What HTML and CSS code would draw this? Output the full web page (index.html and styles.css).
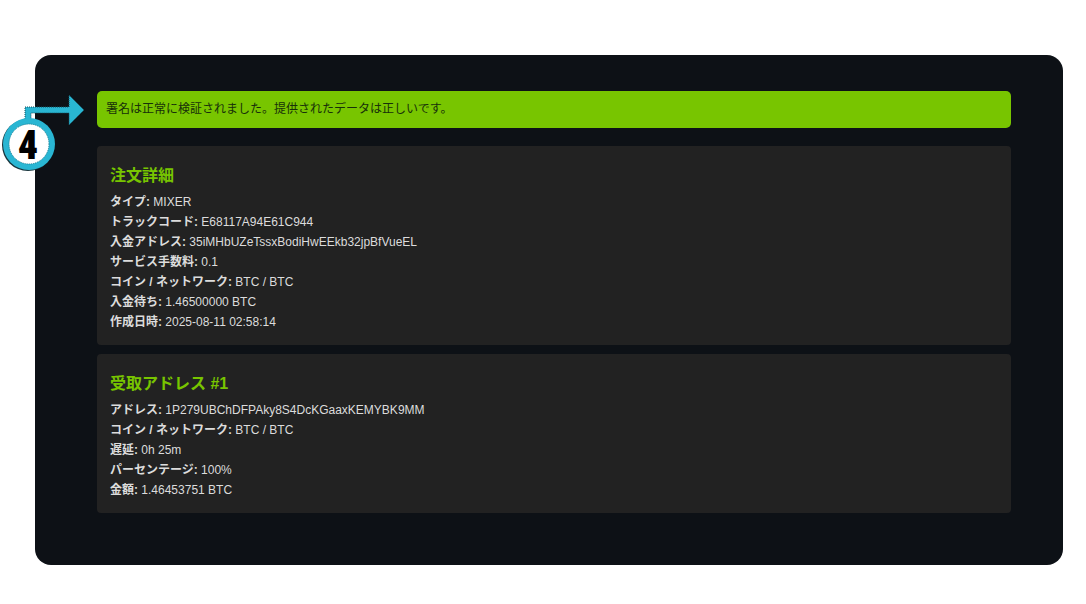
FILE: index.html
```html
<!DOCTYPE html>
<html lang="ja">
    <head>
        <meta charset="UTF-8">
        <meta name="viewport" content="width=device-width, initial-scale=1.0">
        <title>注文詳細</title>
        <link rel="stylesheet" href="styles.css">
    </head>

    <body>
        <main class="Panel">
            <div class="Step">
                <svg width="88" height="84" viewBox="0 0 88 84">
                    <path d="M25 36V16H69V4L84 19L69 34V22H31V36Z" fill="#29b6d3" stroke="#17505e" stroke-width="1" stroke-dasharray="1 1"/>
                    <circle cx="28" cy="54" r="26" fill="#17343c"/>
                    <circle cx="29" cy="53" r="26" fill="#29b6d3"/>
                    <circle cx="29" cy="53" r="20" fill="#fff" stroke="#1f7f94" stroke-width="1" stroke-dasharray="1 1"/>
                    <text class="StepNumber" x="28" y="68" text-anchor="middle">4</text>
                </svg>
            </div>

            <div class="Alert">署名は正常に検証されました。提供されたデータは正しいです。</div>

            <section class="Card">
                <h2>注文詳細</h2>
                <p><strong>タイプ:</strong> MIXER</p>
                <p><strong>トラックコード:</strong> E68117A94E61C944</p>
                <p><strong>入金アドレス:</strong> 35iMHbUZeTssxBodiHwEEkb32jpBfVueEL</p>
                <p><strong>サービス手数料:</strong> 0.1</p>
                <p><strong>コイン / ネットワーク:</strong> BTC / BTC</p>
                <p><strong>入金待ち:</strong> 1.46500000 BTC</p>
                <p><strong>作成日時:</strong> 2025-08-11 02:58:14</p>
            </section>

            <section class="Card">
                <h2>受取アドレス #1</h2>
                <p><strong>アドレス:</strong> 1P279UBChDFPAky8S4DcKGaaxKEMYBK9MM</p>
                <p><strong>コイン / ネットワーク:</strong> BTC / BTC</p>
                <p><strong>遅延:</strong> 0h 25m</p>
                <p><strong>パーセンテージ:</strong> 100%</p>
                <p><strong>金額:</strong> 1.46453751 BTC</p>
            </section>
        </main>
    </body>
</html>
```

FILE: styles.css
```css
body {
    margin: 0;
    padding: 55px 23px 39px 35px;
    background: #fff;
    color: #dcdcdc;
    font-family: "Liberation Sans", "Noto Sans CJK JP", sans-serif;
    font-size: 12px;
    line-height: 20px;
}

.Panel {
    position: relative;
    padding: 36px 52px 52px 62px;
    border-radius: 16px;
    background: #0d1116;
}

.Alert {
    margin-bottom: 18px;
    padding: 8px 9px 9px;
    border-radius: 5px;
    background: #78c500;
    color: #17300a;
}

.Card {
    padding: 18px 13px 13px;
    border-radius: 4px;
    background: #222;
}

.Card + .Card {
    margin-top: 9px;
}

.Card h2 {
    margin: 0 0 4px;
    color: #78c500;
    font-size: 16px;
    line-height: 24px;
}

.Card p {
    margin: 0;
}

/* step marker hangs over the left edge of the panel */
.Step {
    position: absolute;
    top: 36px;
    left: -35px;
}

.Step svg {
    display: block;
}

.StepNumber {
    fill: #000;
    font-family: Impact, "Roboto Condensed", Roboto, sans-serif;
    font-size: 40px;
    font-weight: 900;
}
```
